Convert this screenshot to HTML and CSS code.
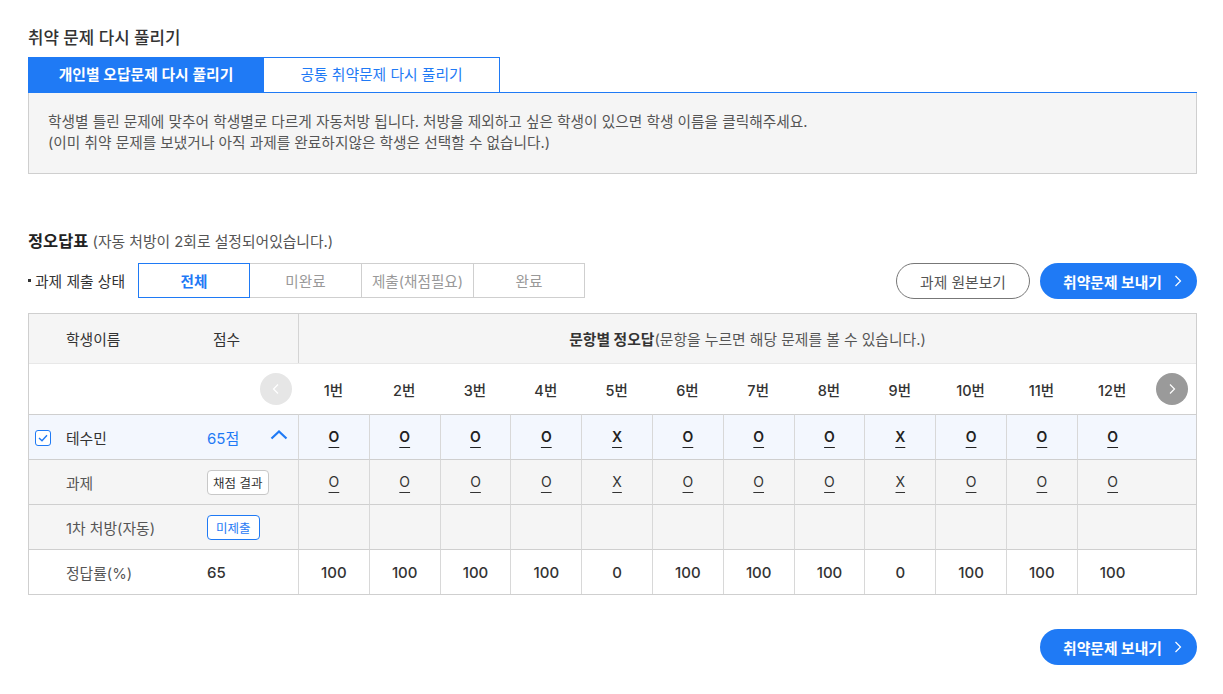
FILE: index.html
```html
<!DOCTYPE html>
<html lang="ko">
<head>
<meta charset="utf-8">
<title>취약 문제 다시 풀리기</title>
<link rel="stylesheet" href="styles.css">
</head>
<body>
<div class="page">
  <h2 class="title">취약 문제 다시 풀리기</h2>

  <div class="tabs">
    <div class="tab active">개인별 오답문제 다시 풀리기</div>
    <div class="tab">공통 취약문제 다시 풀리기</div>
  </div>
  <div class="info">
    <p>학생별 틀린 문제에 맞추어 학생별로 다르게 자동처방 됩니다. 처방을 제외하고 싶은 학생이 있으면 학생 이름을 클릭해주세요.</p>
    <p>(이미 취약 문제를 보냈거나 아직 과제를 완료하지않은 학생은 선택할 수 없습니다.)</p>
  </div>

  <div class="section-head"><strong>정오답표</strong> (자동 처방이 2회로 설정되어있습니다.)</div>

  <div class="filter-row">
    <div class="filter-left">
      <span class="filter-label"><i class="bullet"></i>과제 제출 상태</span>
      <div class="segments">
        <button class="seg active">전체</button>
        <button class="seg">미완료</button>
        <button class="seg">제출(채점필요)</button>
        <button class="seg">완료</button>
      </div>
    </div>
    <div class="filter-right">
      <button class="btn-outline">과제 원본보기</button>
      <button class="btn-primary">취약문제 보내기
        <svg class="chev" width="8" height="12" viewBox="0 0 8 12"><polyline points="1.5,1 6.5,6 1.5,11" fill="none" stroke="#fff" stroke-width="1.2"/></svg>
      </button>
    </div>
  </div>

  <table class="grid">
    <colgroup>
      <col class="c-name"><col class="c-score">
      <col class="c-q"><col class="c-q"><col class="c-q"><col class="c-q"><col class="c-q"><col class="c-q">
      <col class="c-q"><col class="c-q"><col class="c-q"><col class="c-q"><col class="c-q"><col class="c-q">
      <col class="c-extra">
    </colgroup>
    <thead>
      <tr class="h1">
        <th class="th-name">학생이름</th>
        <th class="th-score">점수</th>
        <th class="th-q" colspan="13"><strong>문항별 정오답</strong>(문항을 누르면 해당 문제를 볼 수 있습니다.)</th>
      </tr>
      <tr class="h2">
        <td colspan="2" class="nav-cell">
          <span class="circle prev"><svg width="8" height="12" viewBox="0 0 8 12"><polyline points="6,1.5 1.5,6 6,10.5" fill="none" stroke="#fff" stroke-width="1.2"/></svg></span>
        </td>
        <td>1번</td><td>2번</td><td>3번</td><td>4번</td><td>5번</td><td>6번</td>
        <td>7번</td><td>8번</td><td>9번</td><td>10번</td><td>11번</td><td>12번</td>
        <td class="nav-cell next-cell">
          <span class="circle next"><svg width="8" height="12" viewBox="0 0 8 12"><polyline points="2,1.5 6.5,6 2,10.5" fill="none" stroke="#fff" stroke-width="1.2"/></svg></span>
        </td>
      </tr>
    </thead>
    <tbody>
      <tr class="r-student">
        <td class="name"><span class="check"><svg width="10" height="8" viewBox="0 0 10 8"><polyline points="1,4 4,6.8 9,1.2" fill="none" stroke="#1f7af5" stroke-width="1.4"/></svg></span>테수민</td>
        <td class="score"><span class="pts">65점</span><svg class="up" width="18" height="10" viewBox="0 0 18 10"><polyline points="1.5,8.5 9,1.5 16.5,8.5" fill="none" stroke="#1f7af5" stroke-width="2.2"/></svg></td>
        <td class="q"><u>O</u></td><td class="q"><u>O</u></td><td class="q"><u>O</u></td><td class="q"><u>O</u></td>
        <td class="q"><u>X</u></td><td class="q"><u>O</u></td><td class="q"><u>O</u></td><td class="q"><u>O</u></td>
        <td class="q"><u>X</u></td><td class="q"><u>O</u></td><td class="q"><u>O</u></td><td class="q"><u>O</u></td>
        <td class="extra"></td>
      </tr>
      <tr class="r-gray r-task">
        <td class="name sub">과제</td>
        <td class="score"><button class="chip">채점 결과</button></td>
        <td class="q"><u>O</u></td><td class="q"><u>O</u></td><td class="q"><u>O</u></td><td class="q"><u>O</u></td>
        <td class="q"><u>X</u></td><td class="q"><u>O</u></td><td class="q"><u>O</u></td><td class="q"><u>O</u></td>
        <td class="q"><u>X</u></td><td class="q"><u>O</u></td><td class="q"><u>O</u></td><td class="q"><u>O</u></td>
        <td class="extra"></td>
      </tr>
      <tr class="r-gray">
        <td class="name sub">1차 처방(자동)</td>
        <td class="score"><button class="chip blue">미제출</button></td>
        <td class="q"></td><td class="q"></td><td class="q"></td><td class="q"></td>
        <td class="q"></td><td class="q"></td><td class="q"></td><td class="q"></td>
        <td class="q"></td><td class="q"></td><td class="q"></td><td class="q"></td>
        <td class="extra"></td>
      </tr>
      <tr class="r-rate">
        <td class="name sub">정답률(%)</td>
        <td class="score"><span class="val">65</span></td>
        <td class="q">100</td><td class="q">100</td><td class="q">100</td><td class="q">100</td>
        <td class="q">0</td><td class="q">100</td><td class="q">100</td><td class="q">100</td>
        <td class="q">0</td><td class="q">100</td><td class="q">100</td><td class="q">100</td>
        <td class="extra"></td>
      </tr>
    </tbody>
  </table>

  <div class="bottom">
    <button class="btn-primary">취약문제 보내기
      <svg class="chev" width="8" height="12" viewBox="0 0 8 12"><polyline points="1.5,1 6.5,6 1.5,11" fill="none" stroke="#fff" stroke-width="1.2"/></svg>
    </button>
  </div>
</div>
</body>
</html>
```

FILE: styles.css
```css
* { box-sizing: border-box; }
html, body { margin: 0; padding: 0; background: #fff; }
body {
  font-family: Inter, "Noto Sans CJK KR", sans-serif;
  color: #333;
  font-size: 14.8px;
}
button { font-family: inherit; cursor: pointer; }

.page {
  width: 1223px;
  padding: 28px 26px 0 28px;
}

.title {
  margin: 0;
  font-size: 16.8px;
  line-height: 20px;
  font-weight: 500;
  color: #333;
}

/* tabs */
.tabs {
  display: flex;
  margin-top: 9px;
  border-bottom: 1px solid #1f7af5;
}
.tab {
  width: 236px;
  height: 35px;
  line-height: 34px;
  text-align: center;
  font-size: 14.8px;
  color: #1f7af5;
  border: 1px solid #1f7af5;
  border-bottom: none;
  border-left: none;
  background: #fff;
}
.tab.active {
  background: #1f7af5;
  color: #fff;
  font-weight: 600;
  border-left: 1px solid #1f7af5;
}

.info {
  background: #f5f5f5;
  border: 1px solid #cfcfcf;
  border-top: none;
  padding: 19px 19px 18px;
  height: 81px;
  color: #555;
  font-size: 14.7px;
  line-height: 21px;
}
.info p { margin: 0; }

.section-head {
  margin-top: 57px;
  font-size: 14.8px;
  line-height: 20px;
  color: #555;
}
.section-head strong {
  font-size: 16.4px;
  color: #222;
  font-weight: 700;
}

/* filter row */
.filter-row {
  margin-top: 11px;
  display: flex;
  justify-content: space-between;
  align-items: flex-start;
}
.filter-left { display: flex; align-items: center; }
.filter-label {
  width: 110px;
  display: inline-flex;
  align-items: center;
  font-size: 14.8px;
  color: #333;
}
.bullet {
  display: inline-block;
  width: 3px;
  height: 3px;
  background: #333;
  margin-right: 4px;
}
.segments { display: flex; }
.seg {
  width: 112px;
  height: 35px;
  border: 1px solid #cfcfcf;
  border-left: none;
  background: #fff;
  color: #999;
  font-size: 14.6px;
  padding: 0;
}
.seg:last-child { width: 111px; }
.seg.active {
  border: 1px solid #1f7af5;
  color: #1f7af5;
  font-weight: 700;
}

.filter-right { display: flex; gap: 10px; }
.btn-outline {
  width: 134px;
  height: 36px;
  border: 1px solid #777;
  border-radius: 18px;
  background: #fff;
  color: #555;
  font-size: 14.8px;
  padding: 0;
}
.btn-primary {
  width: 157px;
  height: 36px;
  border: none;
  border-radius: 18px;
  background: #1f7af5;
  color: #fff;
  font-size: 14.8px;
  font-weight: 700;
  padding: 0 0 0 8px;
  display: inline-flex;
  align-items: center;
  justify-content: center;
  gap: 12px;
}
.chev { display: block; }

/* grid table */
.grid {
  margin-top: 14px;
  width: 1169px;
  table-layout: fixed;
  border-collapse: separate;
  border-spacing: 0;
  border: 1px solid #cfcfcf;
}
.c-name { width: 169px; }
.c-score { width: 100px; }
.c-q { width: 70.8px; }
.c-extra { width: 48.4px; }

.grid th, .grid td {
  padding: 0;
  font-weight: 400;
  text-align: center;
  vertical-align: middle;
  white-space: nowrap;
}

.h1 { background: #f5f5f5; height: 49px; }
.h1 th { font-size: 14.8px; color: #333; }
.h1 .th-name { text-align: left; padding-left: 37px; }
.h1 .th-score { text-align: left; padding-left: 15px; }
.h1 .th-q { border-left: 1px solid #d4d4d4; color: #555; }
.h1 .th-q strong { font-weight: 700; color: #333; }

.h2 { height: 51px; }
.h2 td {
  border-top: 1px solid #e8e8e8;
  font-size: 14.5px;
  font-weight: 500;
  color: #333;
}
.nav-cell { text-align: right !important; padding-right: 6px !important; }
.next-cell { text-align: left !important; padding: 0 0 0 8px !important; }
.circle {
  display: inline-flex;
  width: 32px;
  height: 32px;
  border-radius: 50%;
  align-items: center;
  justify-content: center;
  vertical-align: middle;
}
.circle.prev { background: #e6e6e6; }
.circle.next { background: #9a9a9a; }

tbody tr { height: 45px; }
tbody td { border-top: 1px solid #cfcfcf; }
tbody td.q { border-left: 1px solid #d8d8d8; }

.r-student { background: #f3f7fe; }
.r-gray { background: #f5f5f5; }

td.name {
  text-align: left;
  padding-left: 37px;
  font-size: 14.8px;
  color: #333;
}
.r-student td.name { padding-left: 6px; }
.check {
  display: inline-flex;
  width: 16px;
  height: 16px;
  border: 1.5px solid #1f7af5;
  border-radius: 3px;
  background: #fff;
  align-items: center;
  justify-content: center;
  vertical-align: middle;
  margin-right: 15px;
  position: relative;
  top: -1px;
}
td.name.sub { color: #555; }

td.score {
  text-align: left;
  padding-left: 9px;
}
.pts {
  color: #1f7af5;
  font-size: 15px;
  font-weight: 400;
}
.up {
  float: right;
  margin: 3px 10px 0 0;
}

.q u {
  text-decoration: underline;
  text-underline-offset: 5px;
  text-decoration-thickness: 1px;
  font-size: 14px;
  color: #222;
}
.r-student .q u { font-weight: 600; }
.r-task .q u { font-weight: 400; color: #333; }

.chip {
  height: 25px;
  padding: 0 5px;
  font-size: 12.5px;
  color: #333;
  background: #fff;
  border: 1px solid #c8c8c8;
  border-radius: 4px;
}
.chip.blue {
  color: #1f7af5;
  border-color: #1f7af5;
  padding: 0 8px;
}

.r-rate td.q, .val {
  font-size: 15px;
  font-weight: 500;
  color: #333;
}

.bottom {
  margin-top: 34px;
  display: flex;
  justify-content: flex-end;
}
```
